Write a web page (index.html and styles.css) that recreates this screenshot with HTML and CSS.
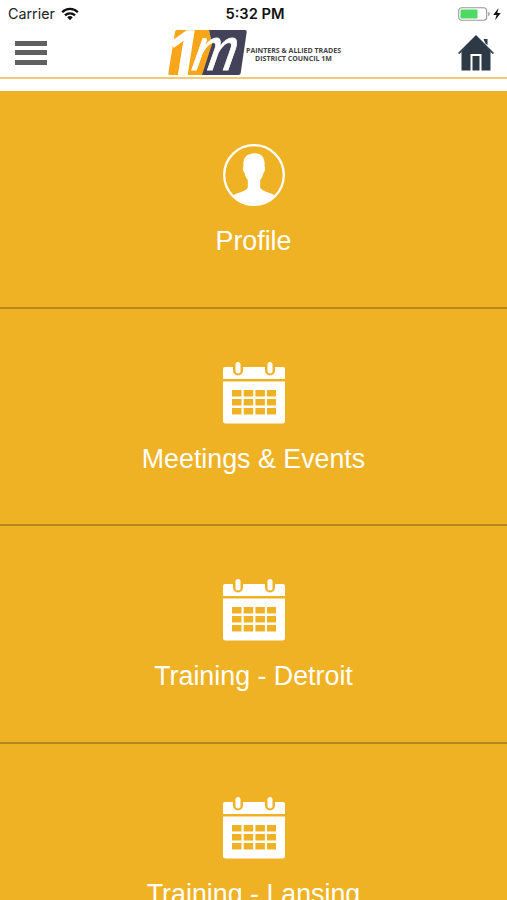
FILE: index.html
```html
<!DOCTYPE html>
<html lang="en">
<head>
  <meta charset="UTF-8">
  <meta name="viewport" content="width=device-width, initial-scale=1.0">
  <title>District Council 1M</title>
  <link rel="stylesheet" href="styles.css">
</head>
<body>
  <div class="statusbar">
    <div class="carrier">
      <span>Carrier</span>
      <svg width="18" height="14" viewBox="0 0 18 14">
        <g fill="none" stroke="#111" stroke-width="2.3">
          <path d="M1.2 5.2a11 11 0 0 1 15.6 0"/>
          <path d="M4 8.4a7 7 0 0 1 10 0"/>
        </g>
        <path d="M9 13.2 6.2 10.3a4 4 0 0 1 5.6 0z" fill="#111"/>
      </svg>
    </div>
    <div class="time">5:32 PM</div>
    <div class="battery">
      <svg width="44" height="14" viewBox="0 0 44 14">
        <rect x=".7" y=".7" width="28" height="12.6" rx="3" fill="#fff" stroke="#999" stroke-width="1.1"/>
        <rect x="2.5" y="2.4" width="17" height="9.2" rx="1" fill="#4cd964"/>
        <path d="M30.2 4.8q1.6.6 1.6 2.2t-1.6 2.2z" fill="#999"/>
        <path d="M40.6 1 35.2 8h3.4L37 13.2 42.8 6h-3.5z" fill="#111"/>
      </svg>
    </div>
  </div>

  <header class="navbar">
    <button class="menuBtn" aria-label="Menu">
      <span></span><span></span><span></span>
    </button>

    <div class="logo">
      <svg class="mark" width="80" height="47" viewBox="0 0 80 47">
        <path d="M9 1h32l3 14-8 31H2q-2 0-1.600-2L7 3q.4-2 2-2z" fill="#f9a51a"/>
        <path d="M41 1h36q2 0 1.700 2l-6 41q-.3 2-2.200 2H34l10-31z" fill="#434258"/>
        <text class="logoOne" transform="translate(-7 46.500) skewX(-9)">1</text>
        <text class="logoM" transform="translate(22 41) skewX(-14) scale(1.150 1.300)">m</text>
      </svg>
      <p class="logoText">PAINTERS &amp; ALLIED TRADES<br>DISTRICT COUNCIL 1M</p>
    </div>

    <a class="homeBtn" href="#" aria-label="Home">
      <svg width="36" height="36" viewBox="0 0 36 36" fill="#2d3a45">
        <path d="M25.500 4h4v6l-2-1.500z"/>
        <path d="M18 0 0 18l1.200 1L18 3.500 34.800 19l1.200-1z"/>
        <path d="M18 2 3.500 16.500V35.500H12.500V19h11v16.500H32.500V16.500z"/>
        <path d="M14.500 21h7v14.500h-7z"/>
      </svg>
    </a>
  </header>

  <svg width="0" height="0" class="symbols">
    <symbol id="calendar" viewBox="0 0 62 62">
      <path d="M2 5h8v3.500a5 5 0 0 0 10 0V5h22v3.500a5 5 0 0 0 10 0V5h8q2 0 2 2v10H0V7q0-2 2-2z"/>
      <rect x="12.500" y="0" width="5" height="11.500" rx="2.500"/>
      <rect x="44.500" y="0" width="5" height="11.500" rx="2.500"/>
      <path fill-rule="evenodd" d="M0 19.500h62V59q0 2.500-2.500 2.500h-57Q0 61.500 0 59zM9 28v6.500h9.500V28zm11.700 0v6.500h9.500V28zm11.700 0v6.500h9.500V28zm11.600 0v6.500h9V28zM9 37v6.500h9.500V37zm11.700 0v6.500h9.500V37zm11.700 0v6.500h9.500V37zm11.600 0v6.500h9V37zM9 46v6.500h9.500V46zm11.700 0v6.500h9.500V46zm11.700 0v6.500h9.500V46zm11.600 0v6.500h9V46z"/>
    </symbol>
  </svg>

  <main class="tiles">
    <a class="tile" href="#">
      <svg class="icon" viewBox="0 0 62 62">
        <circle cx="31" cy="31" r="29.800" fill="none" stroke="#fff" stroke-width="2.300"/>
        <path d="M30 9.500c8-1 12.500 4 11.500 13 1.200 1 .5 5-1.100 6.500-.6 3-1.600 5.200-3.200 7v7.500c1.500 4 9 4.500 14.800 8a30 30 0 0 1-42 0c5.800-3.500 13.300-4 14.800-8V36c-1.600-1.800-2.600-4-3.200-7-1.600-1.500-2.300-5.500-1.100-6.500-1-8 2.500-12.500 9.500-13z"/>
      </svg>
      <p>Profile</p>
    </a>
    <a class="tile" href="#">
      <svg class="icon"><use href="#calendar"/></svg>
      <p>Meetings &amp; Events</p>
    </a>
    <a class="tile" href="#">
      <svg class="icon"><use href="#calendar"/></svg>
      <p>Training - Detroit</p>
    </a>
    <a class="tile" href="#">
      <svg class="icon"><use href="#calendar"/></svg>
      <p>Training - Lansing</p>
    </a>
  </main>
</body>
</html>
```
FILE: styles.css
```css
* {
  box-sizing: border-box;
}

body {
  margin: 0;
  height: 900px;
  overflow: hidden;
  background: #fff;
  font-family: "Liberation Sans", Arial, sans-serif;
}

svg {
  display: block;
}

.statusbar {
  display: grid;
  grid-template-columns: 1fr auto 1fr;
  align-items: center;
  height: 27px;
  padding: 0 5px 0 8px;
  font-family: Inter, sans-serif;
  font-size: 14.3px;
  color: #222;
}

.carrier {
  display: flex;
  align-items: center;
  gap: 6px;
}

.time {
  font-weight: 600;
  font-size: 14.7px;
  color: #111;
}

.battery {
  justify-self: end;
}

.navbar {
  display: grid;
  grid-template-columns: 1fr auto 1fr;
  height: 52px;
  padding: 2px 13px 0 15px;
  border-bottom: 2px solid #f5c878;
}

.menuBtn {
  display: flex;
  flex-direction: column;
  gap: 4.5px;
  width: 32px;
  margin: 11.5px 0 0;
  padding: 0;
  border: none;
  background: none;
}

.menuBtn span {
  width: 32px;
  height: 5px;
  background: #606060;
}

.logo {
  display: flex;
}

.mark {
  overflow: visible;
}

.logoOne {
  font: bold 64px "Open Sans", sans-serif;
  fill: #fff;
}

.logoM {
  font: italic 48px Lato, sans-serif;
  fill: #fff;
  stroke: #fff;
  stroke-width: .6px;
}

.logoText {
  margin: 18px 0 0 -2px;
  font: bold 7px/8px "Open Sans", sans-serif;
  text-align: center;
  white-space: nowrap;
  color: #444;
}

.homeBtn {
  justify-self: end;
  margin-top: 6px;
}

.symbols {
  position: absolute;
}

.tiles {
  margin-top: 12px;
}

.tile {
  display: flex;
  flex-direction: column;
  align-items: center;
  height: 217.5px;
  padding-top: 53px;
  border-bottom: 2px solid #b5881d;
  background: #efb224;
  color: #fff;
  text-decoration: none;
}

.icon {
  width: 62px;
  height: 62px;
  fill: #fff;
}

.tile p {
  margin: 20px 0 0;
  font-size: 26.8px;
  line-height: 31px;
}
```
